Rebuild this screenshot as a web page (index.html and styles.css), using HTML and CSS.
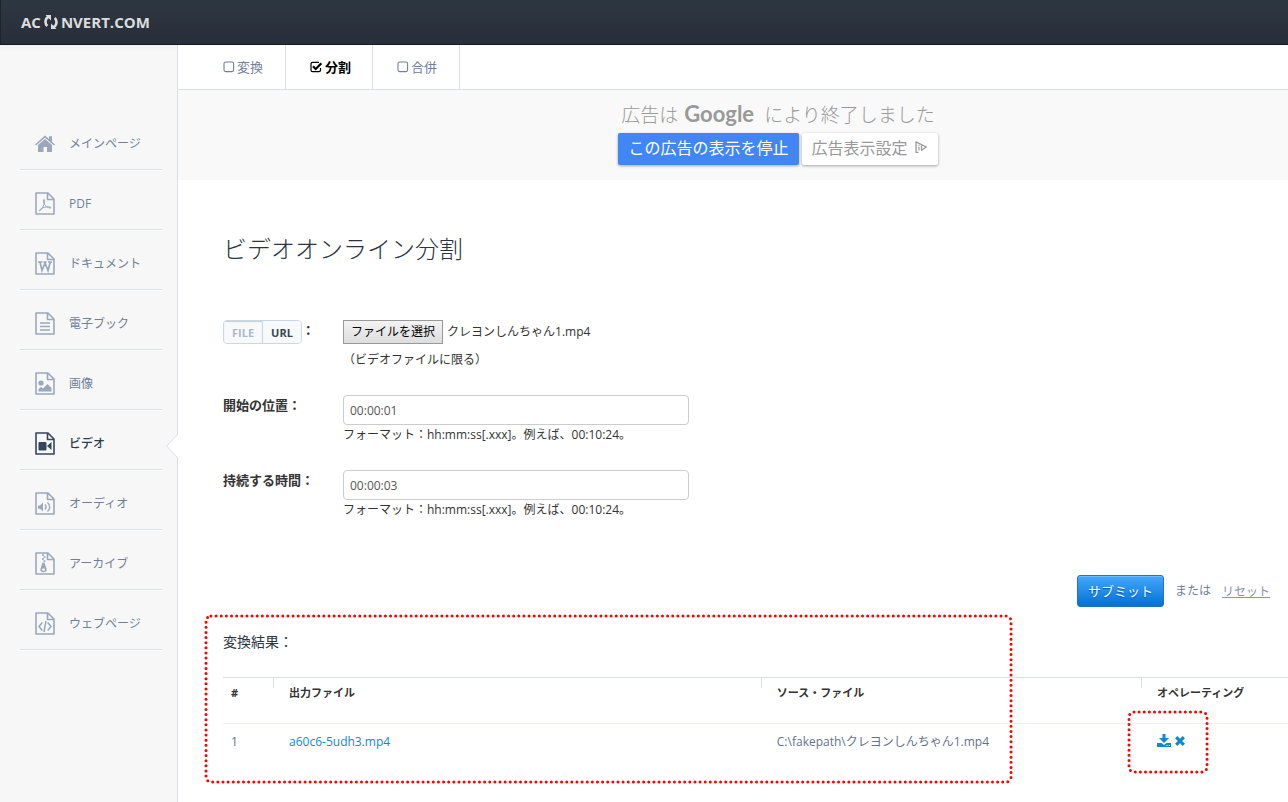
FILE: index.html
```html
<!DOCTYPE html>
<html lang="ja">
<head>
<meta charset="utf-8">
<meta name="viewport" content="width=device-width, initial-scale=1">
<title>ビデオオンライン分割</title>
<link rel="stylesheet" href="styles.css">
</head>
<body>
<svg class="defs" aria-hidden="true">
  <symbol id="page" viewBox="0 0 20 23"><path d="M1 1H13L19 7V22H1Z M12.500 1V7.500H19" fill="none" stroke="currentColor" stroke-width="1.600" stroke-linejoin="round"/></symbol>
  <symbol id="box" viewBox="0 0 12 12"><rect x="1" y="1" width="9.600" height="9.600" rx="1.600" fill="none" stroke="currentColor" stroke-width="1.100"/></symbol>
</svg>
<header class="topbar">
  <a class="brand" href="#" aria-label="AC NVERT.COM"><span>AC</span><svg class="brand-icon" viewBox="0 0 14 16"><path d="M5 2.800C1 4 .5 9.500 3.300 12M9 13.200C13 12 13.500 6.500 10.700 4" fill="none" stroke="#ddd" stroke-width="2.600"/><path d="M1.500 1H7V6.500ZM12.500 15H7V9.500Z" fill="#ddd"/></svg><span>NVERT.COM</span></a>
</header>
<div class="layout">
  <nav class="sidebar">
    <ul class="menu">
      <li><a href="#"><svg viewBox="0 0 20 23"><path d="M0 12.400 10 3.500 14 7V4.300H17V9.700L20 12.400 19 13.600 10 5.700 1 13.600ZM3 13 10 7 17 13V20H12V15H8.500V20H3Z" fill="currentColor"/></svg>メインページ</a></li>
      <li><a href="#"><svg viewBox="0 0 20 23"><use href="#page"/><path d="M9 7.500C8 7.500 8.300 10 9.200 11.800 10.500 14.300 13.500 16.500 16 15.800 15.800 14.500 11.500 14.500 8 15.800 5.500 16.800 4 18.500 4.300 19 5.300 19.300 7.500 16 8.800 13 9.800 10.500 10 7.500 9 7.500Z" fill="none" stroke="currentColor"/></svg>PDF</a></li>
      <li><a href="#"><svg viewBox="0 0 20 23"><use href="#page"/><path d="M3 10H7.500M8.500 10H11.500M13 10H17M5 10 7 18.500 10 11 13 18.500 15.300 10" fill="none" stroke="currentColor" stroke-width="1.700"/></svg>ドキュメント</a></li>
      <li><a href="#"><svg viewBox="0 0 20 23"><use href="#page"/><path d="M5 11H15M5 14.500H15M5 18H15" stroke="currentColor" stroke-width="1.400"/></svg>電子ブック</a></li>
      <li><a href="#"><svg viewBox="0 0 20 23"><use href="#page"/><circle cx="6" cy="11" r="2.600" fill="currentColor"/><path d="M3.500 19.500V17L6 15 8 16.500 12.500 12 16.500 16V19.500Z" fill="currentColor"/></svg>画像</a></li>
      <li class="active"><a href="#" aria-current="page"><svg viewBox="0 0 20 23"><use href="#page"/><rect x="3.500" y="10" width="8" height="8.500" rx="1" fill="currentColor"/><path d="M12 14 16.500 10V18Z" fill="currentColor"/></svg>ビデオ</a><svg class="pointer" viewBox="0 0 12 24"><path d="M12 0V24L.7 12Z" fill="#fff"/><path d="M11.500.500.700 12 11.500 23.500" fill="none" stroke="#d9dfe6"/></svg></li>
      <li><a href="#"><svg viewBox="0 0 20 23"><use href="#page"/><path d="M3 13.500H5L8 10.500V19.500L5 16.800H3Z" fill="currentColor"/><path d="M10 12.500Q12 15 10 17.500M12.500 10.500Q17 15 12.500 19.500" fill="none" stroke="currentColor" stroke-width="1.400"/></svg>オーディオ</a></li>
      <li><a href="#"><svg viewBox="0 0 20 23"><use href="#page"/><path d="M7 3H9M8.500 5H10.500M7 7H9M8.500 9H10.500" stroke="currentColor" stroke-width="1.500"/><path d="M7.500 10.500H9.500L11.700 17.500C12 21 5 21 5.300 17.500ZM7 17.500C7 19.200 10 19.200 10 17.500 10 16.300 7 16.300 7 17.500Z" fill="currentColor" fill-rule="evenodd"/></svg>アーカイブ</a></li>
      <li><a href="#"><svg viewBox="0 0 20 23"><use href="#page"/><path d="M7.300 10.500 4 14.500 7.300 18.500M12.700 10.500 16 14.500 12.700 18.500M11 9 9 20" fill="none" stroke="currentColor" stroke-width="1.500"/></svg>ウェブページ</a></li>
    </ul>
  </nav>
  <main class="content">
    <nav class="tabs">
      <a href="#"><svg viewBox="0 0 12 12"><use href="#box"/></svg>変換</a>
      <a class="active" href="#" aria-current="page"><svg viewBox="0 0 12 12"><path d="M10.500 7V9Q10.500 10.700 9 10.700H2.600Q1 10.700 1 9V3Q1 1.300 2.600 1.300H9" fill="none" stroke="currentColor" stroke-width="1.200"/><path d="M3 5.300 5.700 8 11.300 2.300" fill="none" stroke="currentColor" stroke-width="2.200"/></svg>分割</a>
      <a href="#"><svg viewBox="0 0 12 12"><use href="#box"/></svg>合併</a>
    </nav>
    <aside class="ad">
      <p class="ad-text">広告は<span class="google">Google</span>により終了しました</p>
      <div class="ad-buttons">
        <button class="ad-stop" type="button">この広告の表示を停止</button>
        <button class="ad-settings" type="button">広告表示設定<svg viewBox="0 0 14 14"><path d="M4.500 12.300H2V1.800L12.300 7 7.500 10.300V5.500" fill="none" stroke="currentColor" stroke-width="1.300" stroke-linejoin="round"/><path d="M5 6.700V10.500M5 4.500V5.700" stroke="currentColor" stroke-width="1.200"/></svg></button>
      </div>
    </aside>
    <form class="form">
      <h1>ビデオオンライン分割</h1>
      <div class="row file-row">
        <div class="row-label"><span class="switch"><button class="chosen" type="button">FILE</button><button type="button">URL</button></span>：</div>
        <div class="field">
          <div class="picker"><input class="file-input" id="file" type="file"><label for="file">ファイルを選択</label><span>クレヨンしんちゃん1.mp4</span></div>
          <p class="note">（ビデオファイルに限る）</p>
        </div>
      </div>
      <div class="row">
        <label class="row-label" for="start">開始の位置：</label>
        <div class="field"><input class="text" id="start" type="text" value="00:00:01"><p class="help">フォーマット：hh:mm:ss[.xxx]。例えば、00:10:24。</p></div>
      </div>
      <div class="row">
        <label class="row-label" for="duration">持続する時間：</label>
        <div class="field"><input class="text" id="duration" type="text" value="00:00:03"><p class="help">フォーマット：hh:mm:ss[.xxx]。例えば、00:10:24。</p></div>
      </div>
      <div class="actions"><button class="submit" type="submit">サブミット</button><span>または</span><button class="reset" type="reset">リセット</button></div>
    </form>
    <section class="results">
      <h2>変換結果：</h2>
      <table>
        <colgroup><col class="c-num"><col class="c-out"><col class="c-src"><col></colgroup>
        <thead><tr><th>#</th><th>出力ファイル</th><th>ソース・ファイル</th><th>オペレーティング</th></tr></thead>
        <tbody><tr><td>1</td><td><a href="#">a60c6-5udh3.mp4</a></td><td>C:\fakepath\クレヨンしんちゃん1.mp4</td>
        <td><div class="ops"><a href="#" aria-label="ダウンロード"><svg class="download" viewBox="0 0 14 13"><path d="M5.500 0H8.500V4H12L7 9 2 4H5.500ZM0 9H4.500L7 11 9.500 9H14V13H0Z" fill="currentColor"/><path d="M9.500 11.500H10.500M11.800 11.500H12.800" stroke="#fff"/></svg></a><a href="#" aria-label="削除"><svg class="remove" viewBox="0 0 10 10"><path d="M1.200 1.200 8.800 8.800M8.800 1.200 1.200 8.800" stroke="currentColor" stroke-width="3.200"/></svg></a>
        <svg class="mark mark-ops" aria-hidden="true"><rect width="100%" height="100%" rx="5"/></svg></div></td></tr></tbody>
      </table>
      <svg class="mark mark-results" aria-hidden="true"><rect width="100%" height="100%" rx="5"/></svg>
    </section>
  </main>
</div>
</body>
</html>
```
FILE: styles.css
```css
* { box-sizing: border-box; }
body {
  margin: 0;
  min-height: 100vh;
  display: flex;
  flex-direction: column;
  overflow-x: hidden;
  background: #fff;
  color: #333;
  font: 12px/20px "Open Sans", "Noto Sans CJK JP", sans-serif;
}
a { color: inherit; text-decoration: none; }
p, h1, h2, ul { margin: 0; padding: 0; }
button { font-family: inherit; cursor: pointer; }
.defs { position: absolute; width: 0; height: 0; }

.topbar {
  height: 45px;
  padding: 0 20px;
  display: flex;
  align-items: center;
  background: linear-gradient(#2d3742, #282e3a);
  border-bottom: 1px solid #12191f;
  border-left: 1px solid #1c2329;
}
.brand { display: flex; align-items: center; gap: 3px; color: #ddd; font-size: 15px; font-weight: 700; }
.brand-icon { width: 14px; height: 16px; }

.layout { flex: 1; display: flex; }
.sidebar {
  flex: none;
  width: 178px;
  padding: 65px 15px 20px 20px;
  background: linear-gradient(#f1f1f1, #f7f7f7 6px);
  border-right: 1px solid #d9dfe6;
}
.menu { list-style: none; }
.menu li { position: relative; height: 60px; border-bottom: 1px solid #d9dfe6; box-shadow: 0 1px #fff; }
.menu a { display: flex; align-items: center; gap: 14px; height: 100%; padding: 8px 0 0 15px; color: #6f809a; }
.menu a svg { width: 20px; height: 23px; color: #9aa8bc; }
.menu .active a { color: #2d3b4e; font-weight: 500; }
.menu .active a svg { color: #34465c; }
.menu .pointer { position: absolute; right: -16px; top: 24px; width: 12px; height: 24px; }

.content { flex: 1; min-width: 0; }
.tabs { display: flex; height: 45px; padding-left: 21px; border-bottom: 1px solid #d9dfe6; }
.tabs a {
  display: flex;
  align-items: center;
  gap: 2px;
  padding: 0 22px 0 24px;
  border-right: 1px solid #d9dfe6;
  color: #6f809a;
  font-size: 13px;
}
.tabs svg { width: 12px; height: 12px; }
.tabs .active { gap: 3px; padding-right: 21px; color: #000; font-weight: 700; }

.ad { height: 90px; padding: 9px 0 0 90px; background: #f9f9f9; text-align: center; color: #999; }
.ad-text { font-size: 19px; font-weight: 300; line-height: 30px; }
.google { margin: 0 10px 0 6px; font-family: Lato, sans-serif; font-size: 22px; font-weight: 700; }
.ad-buttons { display: flex; justify-content: center; gap: 3px; margin-top: 3px; }
.ad-buttons button {
  display: flex;
  align-items: center;
  gap: 6px;
  height: 32px;
  padding: 0 10px 4px;
  border: 0;
  border-radius: 2px;
  box-shadow: 0 1px 3px rgba(0, 0, 0, .35);
  font-size: 16px;
}
.ad-stop { background: #4285f4; color: #fff; }
.ad-settings { background: #fff; color: #999; }
.ad-settings svg { width: 14px; height: 14px; }

.form { padding: 53px 18px 0 45px; }
h1 { color: #2b3542; font-size: 24px; font-weight: 300; line-height: 32px; }
.row { display: flex; margin-bottom: 25px; }
.file-row { margin: 55px 0 25px; }
.row-label { flex: none; width: 120px; font-size: 13px; font-weight: 700; }
.field { flex: 1; min-width: 0; }
.switch { display: inline-flex; vertical-align: middle; border: 1px solid #c8d8e8; border-radius: 4px; overflow: hidden; }
.switch button { height: 22px; padding: 0 8px; border: 0; background: #f8f9fb; color: #3a4557; font-size: 11px; font-weight: 700; }
.switch .chosen { border-right: 1px solid #c8d8e8; color: #adb8c8; box-shadow: inset 0 1px 1px #ccc; }
.picker { position: relative; display: flex; align-items: center; gap: 4px; height: 24px; }
.file-input { position: absolute; width: 100px; height: 24px; opacity: 0; }
.picker label {
  height: 24px;
  padding: 0 7px;
  border: 1px solid #999;
  background: linear-gradient(#f3f3f3, #ddd);
  color: #000;
  line-height: 22px;
}
.note { padding-top: 6px; }
.text {
  display: block;
  width: 100%;
  max-width: 346px;
  height: 30px;
  padding: 0 6px;
  border: 1px solid #ccc;
  border-radius: 4px;
  background: #fff;
  color: #555;
  font: inherit;
}
.actions { display: flex; justify-content: flex-end; align-items: center; gap: 11px; padding-top: 30px; color: #6f809a; }
.submit {
  height: 32px;
  padding: 0 10px 2px;
  border: 1px solid #1a77c4;
  border-radius: 3px;
  background: linear-gradient(#43a8fb, #0470d6);
  box-shadow: inset 0 1px #6bbcff;
  color: #fff;
  font-size: 13px;
  text-shadow: 0 1px 1px #0456a6;
}
.reset { padding: 0; border: 0; background: none; color: #8494aa; font-size: 12px; text-decoration: underline; }

.results { position: relative; padding: 24px 0 18px 45px; }
h2 { color: #2b3542; font-size: 14px; font-weight: 400; line-height: 22px; }
table { width: 100%; margin-top: 24px; border-collapse: collapse; table-layout: fixed; border-top: 1px solid #d9dfe6; }
.c-num { width: 4.7%; }
.c-out { width: 45.8%; }
.c-src { width: 35.7%; }
th {
  height: 46px;
  padding: 5px 0 0 16px;
  border-bottom: 1px solid #edf1f5;
  background: linear-gradient(#d9dfe6, #d9dfe6) 0 0 / 1px 10px no-repeat;
  font-size: 11px;
  text-align: left;
  vertical-align: top;
}
th:first-child { background: none; }
th:first-child, td:first-child { padding-left: 8px; }
td { padding: 8px 0 8px 16px; color: #657388; }
td a { color: #0e8ac9; }
.ops { position: relative; display: flex; align-items: center; gap: 4px; height: 20px; padding-bottom: 3px; }
.ops a { display: flex; }
.download { width: 14px; height: 13px; }
.remove { width: 10px; height: 10px; }
.mark { position: absolute; overflow: visible; pointer-events: none; }
.mark rect { fill: none; stroke: #f00; stroke-width: 3; stroke-linecap: round; stroke-dasharray: 0 5.13; }
.mark-results { left: 28px; top: 9px; width: 805px; height: 166px; }
.mark-ops { left: -28px; top: -20px; width: 78px; height: 60px; }
```
